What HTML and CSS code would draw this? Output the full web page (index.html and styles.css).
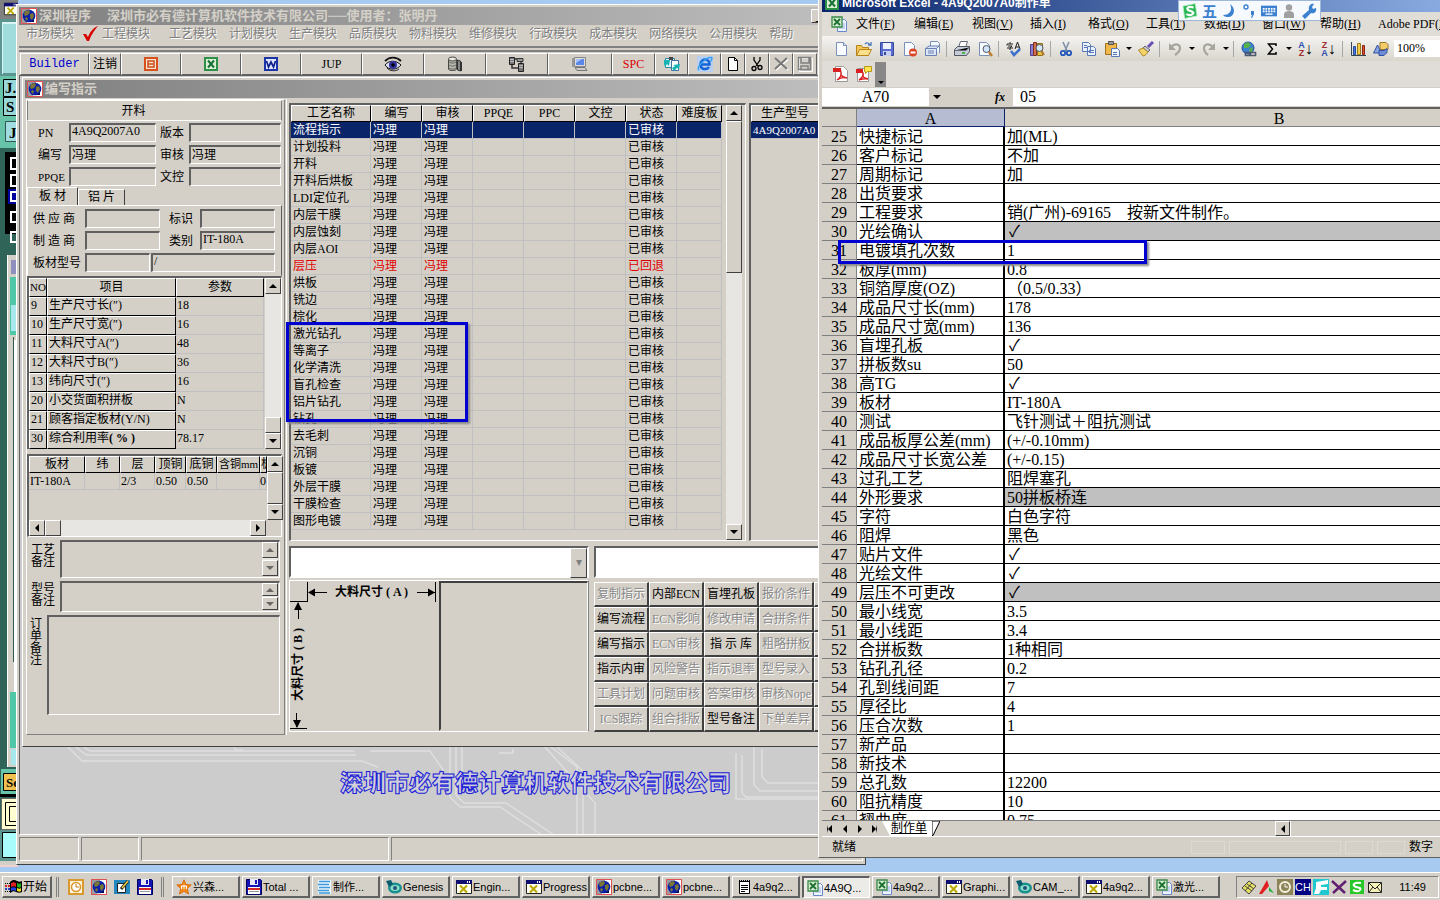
FILE: index.html
```html
<!DOCTYPE html>
<html lang="zh-CN">
  <head>
    <meta charset="UTF-8" />
    <meta name="viewport" content="width=device-width, initial-scale=1.0" />
    <title>深圳程序</title>
    <link rel="stylesheet" href="styles.css">
  </head>
  <body>
    <!-- icons -->
    <svg class="sprite" aria-hidden="true">
      <symbol id="i-globe" viewBox="0 0 16 16"><path fill="#9a9aa0" d="M0 0h16v16H0z"/><path fill="#fff" d="M9 1h6v14H6z"/><path fill="none" stroke="#e05050" d="M.5.5h15v15H.5z"/><circle cx="8" cy="8" r="6.3" fill="#0a1fa8"/><path fill="#7a7436" d="M4 3l4-1 1 2-2 3-3 1-1-2zM9 6l3-1 1 3-2 4-2-2zM5 9l2 1-1 3-2-2z"/><path fill="#000a50" d="M4 13c3 2 7 1 9-2v3H5z"/></symbol>
      <symbol id="i-check" viewBox="0 0 16 16"><path fill="#d80000" d="M1 8l3 0 2 3c2-5 5-9 10-11C12 5 9 9 7 15H5z"/></symbol>
      <symbol id="i-ppt" viewBox="0 0 16 16"><path fill="#fbe3d0" stroke="#d8501c" stroke-width="2" d="M2 2h12v12H2z"/><path fill="none" stroke="#c84c18" stroke-width="1.500" d="M5 5h6v6H5zM5 8h5"/></symbol>
      <symbol id="i-xls" viewBox="0 0 16 16"><path fill="#d9f0d4" stroke="#2c9048" stroke-width="2" d="M2 2h12v12H2z"/><path stroke="#187034" stroke-width="2" d="M5 4.500l6 7M11 4.500l-6 7"/></symbol>
      <symbol id="i-word" viewBox="0 0 16 16"><path fill="#dfe6ff" stroke="#1c34a8" stroke-width="2" d="M2 2h12v12H2z"/><path fill="none" stroke="#10208c" stroke-width="1.700" d="M3.500 5l2 6L8 6l2.500 5 2-6"/></symbol>
      <symbol id="i-eye" viewBox="0 0 18 16"><path fill="none" stroke="#111" stroke-width="1.800" d="M1 5c4-4 11-5 16 0"/><path fill="#d8dcf0" stroke="#111" d="M1 9c4-5 11-5 16 0-4 5-12 6-16 0z"/><circle cx="9" cy="9" r="4" fill="#34349c"/><circle cx="9" cy="9" r="1.800"/><path fill="none" stroke="#222" d="M3 12c3 3 8 4 12 1"/></symbol>
      <symbol id="i-db" viewBox="0 0 16 16"><path fill="#b9b9b0" stroke="#4a4a44" d="M1.500 3v10c0 2 8 2 8 0V3"/><ellipse cx="5.500" cy="3" rx="4" ry="2" fill="#e8e8e0" stroke="#4a4a44"/><path fill="none" stroke="#666" d="M2 6c2 1.500 5 1.500 7 0M2 9c2 1.500 5 1.500 7 0M2 12c2 1.500 5 1.500 7 0"/><path fill="#888" stroke="#333" d="M10.500 4l3 1v10l-3-1z"/><path stroke="#333" d="M14.500 6v9"/></symbol>
      <symbol id="i-net" viewBox="0 0 18 16"><path fill="#777" stroke="#222" d="M1.500 1.500h5v7h-5zM10.500 7.500h5v8h-5z"/><path fill="#bbb" d="M2 3h4v1H2zM2 5h4v1H2zM11 9h4v1h-4zM11 11h4v1h-4z"/><path fill="none" stroke="#333" stroke-width="1.500" d="M7 3h6v4M4 9v3h6"/><path fill="#999" stroke="#333" d="M9 2.500h6v3H9z"/></symbol>
      <symbol id="i-pc" viewBox="0 0 18 16"><path fill="#dcdcdc" stroke="#888" d="M3.500 1.500h11v9h-11z"/><path fill="#5a86e8" d="M5 3h8v6H5z"/><path fill="#a8c4ff" d="M5 3h6l-6 4z"/><path fill="#ccc" stroke="#777" d="M4 11.500h10l2 3H6z"/><path stroke="#999" stroke-width="2" d="M2 2v9"/></symbol>
      <symbol id="i-sync" viewBox="0 0 16 16"><path fill="#e8f6fa" stroke="#2888a0" d="M1.500 2.500h9v9h-9z"/><path fill="#fff" stroke="#3c70a0" d="M7.500 4.500h7v10h-7z"/><path fill="#18b4b4" d="M0 4l6 0-1 6-2-2-2 3-1-3zM16 8l-7 1 2 1-3 2 2 3 3-3 2 1z"/><path fill="#444" d="M5 1h4v3H5z"/></symbol>
      <symbol id="i-ie" viewBox="0 0 16 16"><path fill="#b8cff0" d="M0 0h16v16H0z"/><path fill="none" stroke="#1464d8" stroke-width="2.500" d="M4 8.500h8.500C12.500 1.500 3.500 2 3.500 8.500c0 5 6 6 8.500 2.500"/><path fill="none" stroke="#3aa0f0" stroke-width="1.500" d="M2 14C-1 11 9 1 14.500 1.500c1 .5 0 3-1 4"/></symbol>
      <symbol id="i-new" viewBox="0 0 16 16"><path fill="#fff" stroke="#000" d="M3.500 1.500h6l3 3v10h-9z"/><path fill="none" stroke="#000" d="M9.500 1.500v3h3"/></symbol>
      <symbol id="i-cutb" viewBox="0 0 16 16"><g fill="none" stroke="#000" stroke-width="1.300"><path d="M5 1v3l4 6M11 1v3l-4 6"/><circle cx="5" cy="12.500" r="2"/><circle cx="11" cy="11.500" r="2"/></g></symbol>
      <symbol id="i-del" viewBox="0 0 16 16"><path stroke="#fff" stroke-width="2" d="M3 3l12 11M15 3L3 14"/><path stroke="#777" stroke-width="2" d="M2 2l12 11M14 2L2 13"/></symbol>
      <symbol id="i-saveg" viewBox="0 0 16 16"><path fill="none" stroke="#fff" d="M2.500 2.500h13v13h-13z"/><path fill="none" stroke="#808080" stroke-width="1.500" d="M1.500 1.500h12v12h-12zM4 2v5h8V2M4 14v-4h7v4"/></symbol>
      <symbol id="i-xl" viewBox="0 0 16 16"><path fill="#eef4ff" stroke="#6a88c8" d="M6.500 3.500h7l2 2v10h-9z"/><path stroke="#9ab4e4" d="M8 8h6M8 10h6M8 12h6"/><path fill="#d6ecd0" stroke="#388848" stroke-width="1.300" d="M1 1h10v10H1z"/><path stroke="#1c7030" stroke-width="1.800" d="M3 3l6 6M9 3L3 9"/></symbol>
      <symbol id="i-doc" viewBox="0 0 16 16"><path fill="#f8fbff" stroke="#7a8fb8" d="M3.500 1.500h7l3 3v10h-10z"/><path fill="#cfdcf4" stroke="#7a8fb8" d="M10.500 1.500v3h3"/></symbol>
      <symbol id="i-open" viewBox="0 0 16 16"><path fill="#f4c858" stroke="#b8821c" d="M.5 14.500v-10h5l1 2h6v8z"/><path fill="#fbe08c" stroke="#b8821c" d="M.5 14.500l3-6h12l-3 6z"/><path fill="none" stroke="#4a78b8" stroke-width="1.300" d="M9 3c2-2 4-1 5 1m1-3v3h-3"/></symbol>
      <symbol id="i-save" viewBox="0 0 16 16"><path fill="#5a6ed0" stroke="#38489c" d="M1.500 1.500h13v13h-13z"/><path fill="#eef2ff" d="M4 2h8v6H4z"/><path fill="#c8d0f0" d="M4 10h8v5H4z"/><path fill="#38489c" d="M5 11h2v3H5z"/></symbol>
      <symbol id="i-perm" viewBox="0 0 16 16"><path fill="#f8fbff" stroke="#7a8fb8" d="M2.500 1.500h7l3 3v10h-10z"/><circle cx="11" cy="11.500" r="4" fill="#dc4424"/><path fill="#fff" d="M8.500 10.500h5v2h-5z"/></symbol>
      <symbol id="i-mail" viewBox="0 0 16 16"><path fill="#f4f8ff" stroke="#7a8fb8" d="M5.500 6V.5h7l2 2V12"/><path fill="#dde6f8" stroke="#6a80b0" d="M.5 7.500L4 5h10l-2.500 2.500v7H.5z"/><path fill="none" stroke="#6a80b0" d="M.5 7.500h11M3 10h6M3 12h6"/></symbol>
      <symbol id="i-print" viewBox="0 0 16 16"><path fill="#fff" stroke="#667" d="M4.500 6.500l2-6h7l-2 6"/><path fill="#c4ccd8" stroke="#556" d="M.5 8.500l3-3h12v5l-3 4H.5z"/><path fill="#48b848" d="M8 11h3v2H8z"/><path stroke="#667" d="M1 9.500h11l3-3"/></symbol>
      <symbol id="i-prev" viewBox="0 0 16 16"><path fill="#f8fbff" stroke="#7a8fb8" d="M2.500 1.500h7l3 3v10h-10z"/><circle cx="9.500" cy="8" r="3.500" fill="#cfe6fa" stroke="#556"/><path stroke="#c08030" stroke-width="2.500" d="M12 11l3 4"/></symbol>
      <symbol id="i-spell" viewBox="0 0 16 16"><path fill="none" stroke="#222" d="M1 3h6M1 3v1.500M4 1v2M2 5h4L4 7v2M1 7h6M9 8l2.500-7L14 8M10 6h3"/><path fill="none" stroke="#3c70c8" stroke-width="2.500" d="M5 10l3 4 6-6"/></symbol>
      <symbol id="i-res" viewBox="0 0 16 16"><path fill="#8c7cd0" stroke="#50408c" d="M1.500 3.500h3v11h-3z"/><path fill="#d07050" stroke="#803020" d="M4.500 1.500h3v13h-3z"/><path fill="#e8c040" stroke="#907020" d="M8.500 2.500h5v12h-5z"/><circle cx="10.500" cy="7" r="3.500" fill="#d0e8fa" stroke="#555"/><path stroke="#b07830" stroke-width="2" d="M12.500 10l2.500 4"/></symbol>
      <symbol id="i-cut" viewBox="0 0 16 16"><path stroke="#7c8ca8" stroke-width="1.500" d="M5 1l4 9M11 1L7 10"/><g fill="none" stroke="#2458b8" stroke-width="1.800"><circle cx="5" cy="12" r="2.200"/><circle cx="11" cy="12" r="2.200"/></g></symbol>
      <symbol id="i-copy" viewBox="0 0 16 16"><path fill="#eaf1ff" stroke="#5a78b8" d="M1.500 1.500h6l2 2v7h-8zM6.500 5.500h6l2 2v7h-8z"/><path stroke="#5a78b8" d="M3 4.500h3M3 6.500h3M8 9.500h5M8 11.500h5"/></symbol>
      <symbol id="i-paste" viewBox="0 0 16 16"><path fill="#f0b848" stroke="#9c7020" d="M1.500 2.500h11v11h-11z"/><path fill="#999" stroke="#555" d="M4.500.5h5v3h-5z"/><path fill="#eef4ff" stroke="#5a78b8" d="M7.500 7.500h6l2 2v6h-8z"/><path stroke="#5a78b8" d="M9 11.500h4M9 13.500h4"/></symbol>
      <symbol id="i-brush" viewBox="0 0 16 16"><path stroke="#6a50b0" stroke-width="3" d="M10 6l5-5"/><path fill="#c8c8d0" stroke="#667" d="M7 5l5 4-2 2-5-4z"/><path fill="#f4d468" stroke="#a88828" d="M5 7l5 4c-2 3-4 4-5 4L.5 9z"/></symbol>
      <symbol id="i-undo" viewBox="0 0 16 16"><path fill="none" stroke="#a6a49c" stroke-width="2.200" d="M4 6c4-4 9-3 9 1 0 3-2 5-5 7"/><path fill="#a6a49c" d="M2 2v7h7z"/></symbol>
      <symbol id="i-redo" viewBox="0 0 16 16"><path fill="none" stroke="#a6a49c" stroke-width="2.200" d="M12 6C8 2 3 3 3 7c0 3 1 5 4 7"/><path fill="#a6a49c" d="M14 2v7H7z"/></symbol>
      <symbol id="i-link" viewBox="0 0 16 16"><circle cx="7" cy="7" r="6" fill="#3c80d0" stroke="#24549c"/><path fill="#58b048" d="M3 3l4-2 3 3-3 3-4 0zM8 8l4-2-1 5-2 1z"/><path fill="none" stroke="#4c5870" stroke-width="1.600" d="M4.500 11.500h4v3h-4zM9.500 11.500h5v3h-5z"/></symbol>
      <symbol id="i-sum" viewBox="0 0 16 16"><path fill="none" stroke="#000" stroke-width="1.500" d="M12 5V3H4.500l4 5-4 5H12v-2"/></symbol>
      <symbol id="i-chart" viewBox="0 0 16 16"><path fill="none" stroke="#345" d="M1.500 1v13.500H16"/><path fill="#4a7ae0" stroke="#244c9c" d="M3.500 5.500h2v8h-2z"/><path fill="#f4cc48" stroke="#98781c" d="M7.500 2.500h3v11h-3z"/><path fill="#e05030" stroke="#8c2814" d="M12.500 4.500h2v9h-2z"/></symbol>
      <symbol id="i-draw" viewBox="0 0 16 16"><path fill="#f4cc68" stroke="#98782c" d="M7 1.500h6l2 2v5H7z"/><path fill="#88a4e4" stroke="#34509c" d="M.5 12l4-8 4 8z"/><path fill="#6c8cd8" stroke="#34509c" d="M6 9.500h5l3-2v4l-3 3H6z"/></symbol>
      <symbol id="i-pdf" viewBox="0 0 16 16"><path fill="#fff" stroke="#999" d="M2.500.5h8l4 4v11h-12z"/><path fill="#d82020" d="M0 2h8v4H0z"/><path fill="none" stroke="#d82020" stroke-width="1.400" d="M4 14c4-3 5-5 4-8-1 4 2 5 6 6-4-1-7 0-10 2z"/></symbol>
      <symbol id="i-pdfm" viewBox="0 0 16 16"><path fill="#fff" stroke="#999" d="M1.500 2.500h11v13h-11z"/><path fill="#d82020" d="M0 3h7v4H0z"/><path fill="none" stroke="#d82020" stroke-width="1.400" d="M3 14c4-3 5-5 4-7-1 4 1 5 5 6-4-1-6 0-9 1z"/><path fill="#fce44c" stroke="#b89818" d="M8.500.5h7v5h-4l-2 2v-2h-1z"/></symbol>
      <symbol id="i-sogou" viewBox="0 0 18 18"><path fill="#2cb858" stroke="#c0f0cc" d="M1 3.500l14-3 2 14-14 3z"/><path fill="none" stroke="#fff" stroke-width="2.400" d="M13 5C6 3 4 7 8 8.500s6 2 4 4-6 1-7 0"/></symbol>
      <symbol id="i-moon" viewBox="0 0 16 16"><path fill="#3c80d0" d="M9 1c7 5 4 14-3 13-2 0-3-1-4-2 7 0 10-5 7-11z"/></symbol>
      <symbol id="i-punct" viewBox="0 0 16 16"><circle cx="5" cy="4" r="2" fill="none" stroke="#3c80d0" stroke-width="1.400"/><path fill="#3c80d0" d="M10 8h3v3l-2 4h-1l1-3h-1z"/></symbol>
      <symbol id="i-kbd" viewBox="0 0 18 14"><path fill="#3c80d0" d="M0 1h18v12H0z"/><path stroke="#fff" stroke-width="2" stroke-dasharray="2 1" d="M2 4.500h14M2 7.500h14"/><path stroke="#fff" stroke-width="1.500" d="M5 10.500h8"/></symbol>
      <symbol id="i-user" viewBox="0 0 16 16"><circle cx="8" cy="4.500" r="3.200" fill="#a0a0a0"/><path fill="#a0a0a0" d="M3 15V11c0-4 10-4 10 0v4z"/></symbol>
      <symbol id="i-wrench" viewBox="0 0 16 16"><path fill="#3c80d0" d="M1 13l7-6C7 3 10 0 13 1l-2 3 1 2 3-1c1 4-2 6-5 5l-6 6z"/></symbol>
      <symbol id="i-start" viewBox="0 0 18 16"><path fill="#000" d="M5 3c3-3 5-2 7-1s3 1 5 0v11c-2 1-4 1-6 0s-3-1-6 1z"/><path fill="#e02020" d="M6 4c2-1 3-1 5 0v4C9 7 8 7 6 8z"/><path fill="#20b020" d="M12 4c2 1 3 1 4 0v4c-1 1-2 1-4 0z"/><path fill="#2040e0" d="M6 9c2-1 3-1 5 0v3c-2-1-3-1-5 0z"/><path fill="#f0e020" d="M12 9c2 1 3 1 4 0v3c-1 1-2 1-4 0z"/><path stroke="#000" stroke-dasharray="1 1" d="M0 4.500h5M0 12.500h5"/><path stroke="#d02020" stroke-width="2" stroke-dasharray="2 1" d="M0 7h5"/><path stroke="#2040c0" stroke-width="2" stroke-dasharray="2 1" d="M0 10h5"/></symbol>
      <symbol id="i-clock" viewBox="0 0 16 16"><path fill="#fff4d8" stroke="#d89830" stroke-width="2" d="M1 1h14v14H1z"/><circle cx="8" cy="8" r="4.500" fill="#fff" stroke="#d8962c" stroke-width="1.500"/><path fill="none" stroke="#c07818" d="M8 5v3h3"/></symbol>
      <symbol id="i-desk" viewBox="0 0 16 16"><path fill="#2488c0" d="M0 1h16v14H0z"/><path fill="#fff" stroke="#222" d="M3.500 4.500h8v9h-8z"/><path stroke="#222" stroke-width="3" d="M7 10l7-8"/><path stroke="#f0d040" stroke-width="1.500" d="M8 9l6-7"/></symbol>
      <symbol id="i-floppy" viewBox="0 0 16 16"><path fill="#1414b4" stroke="#000060" d="M.5.5h14l1 1v14H.5z"/><path fill="#e8e8f8" d="M4 0h8v6H4z"/><path fill="#1414b4" d="M9 1h2v4H9z"/><path fill="#fff" d="M2 8h12v7H2z"/><path fill="#d02828" d="M2 9h12v2H2z"/><path stroke="#999" d="M3 12.500h10"/></symbol>
      <symbol id="i-star" viewBox="0 0 16 16"><path fill="#f48c20" stroke="#d86c10" d="M8 .8l2 4.700 5.200.5-3.900 3.500 1.200 5.500L8 12.200 3.500 15l1.200-5.500L.8 6 6 5.500z"/><path fill="none" stroke="#fff" d="M5.500 10V7h5v3M8 6v4"/></symbol>
      <symbol id="i-wps" viewBox="0 0 16 16"><path fill="#e8f6ff" d="M2 1h13v14H2z"/><path stroke="#3c98d8" stroke-width="1.500" d="M3 2.500h11M2 5.500h11M3 8.500h11M2 11.500h11M3 14h11"/></symbol>
      <symbol id="i-gen" viewBox="0 0 16 16"><ellipse cx="9" cy="9" rx="7" ry="5.500" fill="#189090"/><path fill="#0c5c70" d="M0 2l5-1 2 4-4 3z"/><ellipse cx="9" cy="9" rx="4.500" ry="3" fill="#90e0c8"/><circle cx="9" cy="9" r="2" fill="#205080"/></symbol>
      <symbol id="i-xwin" viewBox="0 0 16 16"><path fill="#fffff0" stroke="#222" d="M.5 1.500h15v13H.5z"/><path fill="#101070" d="M0 1h16v4H0z"/><path fill="#fff" d="M11 2h1v2h-1zM13 2h1v2h-1z"/><path stroke="#b8a800" stroke-width="2" d="M4 6.500l7 7M11 6.500l-7 7"/></symbol>
      <symbol id="i-note" viewBox="0 0 16 16"><path fill="#fff" stroke="#000" d="M3.500 2.500h10v12h-10z"/><path stroke="#000" stroke-width="2" stroke-dasharray="1 1" d="M3 2h11"/><path stroke="#000" d="M5 6.500h7M5 8.500h7M5 10.500h7M5 12.500h4"/></symbol>
      <symbol id="i-t1" viewBox="0 0 16 16"><path fill="#e8e060" stroke="#444" d="M1 9l7-7 7 5-7 8z"/><path stroke="#444" d="M4 7l7 5M6 5l7 5M4 12l7-8"/></symbol>
      <symbol id="i-t2" viewBox="0 0 16 16"><path fill="#e02020" d="M8 1l2 6-7 8H0z"/><path fill="#20b040" d="M10 8l5 6-5-2z"/></symbol>
      <symbol id="i-t3" viewBox="0 0 16 16"><path fill="#8c8458" d="M0 0h16v16H0z"/><circle cx="8" cy="8" r="5" fill="none" stroke="#f4f0dc" stroke-width="2"/><path fill="none" stroke="#fff" d="M8 5v3h3"/></symbol>
      <symbol id="i-t5" viewBox="0 0 16 16"><path fill="#20c8d0" d="M0 0h16v16H0z"/><path fill="#fff" d="M3 3l12-2v4L8 6v2h6v3H8l-2 4H1l2-6z"/></symbol>
      <symbol id="i-t6" viewBox="0 0 16 16"><path stroke="#602070" stroke-width="2.500" d="M1 2l13 12M15 2L2 14"/></symbol>
      <symbol id="i-t7" viewBox="0 0 16 16"><path fill="#28c828" d="M1 1h14v14H1z"/><path fill="none" stroke="#fff" stroke-width="2" d="M12 4C5 3 3 6 6 7.500s7 1 5 3.500-5 1-7 0"/></symbol>
      <symbol id="i-t8" viewBox="0 0 16 16"><path fill="#f4f0b8" stroke="#222" d="M1.500 3.500h13v10h-13z"/><path fill="none" stroke="#222" d="M2 4l6 6 6-6M2 13l4-5M14 13l-4-5"/></symbol>
    </svg>

    <main class="desktop">
      <!-- windows that stick out on the left -->
      <svg class="behind" width="18" height="872" aria-hidden="true">
        <path fill="#808080" d="M0 0h18v872H0z"/>
        <svg x="3" y="2" width="16" height="14"><use href="#i-xwin"/></svg>
        <path fill="#5c9490" d="M0 19h18v59H0z"/><path fill="#a0dcdc" d="M3 24h15v49H3z"/><path fill="#d8f4f4" d="M2 22h16v2H2zM2 22h1v52H2z"/>
        <path fill="#68c4a8" d="M0 76h18v72H0z"/><path fill="#98d8d8" stroke="#000" d="M3.500 79.500h18v17h-18zM3.500 97.500h18v18h-18z"/>
        <path fill="#a0dce0" stroke="#305850" d="M5.500 121.500h18v20h-18z"/>
        <path fill="#306458" d="M0 148h18v724H0z"/>
        <path fill="#000" d="M5 152h13v82H5z"/><path fill="#0000a0" d="M8 189h10v15H8z"/>
        <path fill="none" stroke="#fff" stroke-width="2" d="M11 158h9v11h-9zM11 175h9v11h-9zM11 192h9v9h-9zM11 212h9v10h-9zM11 232h9v10h-9z"/>
        <path fill="#d4d0c8" d="M7 255h11v512H7z"/><path fill="#fff" d="M7 255h1v512H7zM14 340h2v352h-2z"/><path fill="#9090c0" d="M11 260h7v14h-7z"/>
        <path fill="#50c8a8" d="M10 277h8v58h-8zM10 692h8v56h-8z"/><path fill="#a8e8ec" d="M11 305h7v26h-7zM11 749h7v16h-7z"/><path fill="#305850" d="M13 337h1v325h-1z"/>
        <path fill="#68c4a8" d="M1 769h17v25H1z"/><path fill="#f0c050" stroke="#000" d="M3.500 773.500h18v17h-18z"/>
        <path fill="#000" d="M0 794h18v3H0z"/><path fill="#fffcd0" stroke="#666" d="M1.500 798.500h20v31h-20z"/><path fill="none" stroke="#000" d="M5.500 802.500h16v23h-16zM9.500 806.500h12v15h-12z"/>
        <path fill="#5c9490" d="M0 830h18v35H0z"/><path fill="#a8fcfc" stroke="#000" d="M2.500 832.500h18v25h-18z"/>
        <path fill="#d4d0c8" d="M0 861h18v4H0z"/><path fill="#f0d0d0" d="M0 865h18v2H0z"/><path fill="#a6caf0" d="M0 867h18v5H0z"/>
        <g font-family="Liberation Serif" font-weight="bold" font-size="15"><text x="5" y="93">J.</text><text x="6" y="112">S</text><text x="9" y="138">J</text><text x="6" y="787" font-size="13">Se</text></g>
      </svg>

      <section class="window erp">
        <div class="titlebar">
          <svg class="ico"><use href="#i-globe"/></svg>
          <span>深圳程序</span><span class="company">深圳市必有德计算机软件技术有限公司──使用者：张明丹</span>
          <button class="min" aria-label="最小化">_</button>
        </div>
        <nav class="menu">
          <a href="#">市场模块</a>
          <a href="#" class="checked"><svg class="ico"><use href="#i-check"/></svg>工程模块</a>
          <a href="#">工艺模块</a><a href="#">计划模块</a><a href="#">生产模块</a><a href="#">品质模块</a><a href="#">物料模块</a><a href="#">维修模块</a><a href="#">行政模块</a><a href="#">成本模块</a><a href="#">网络模块</a><a href="#">公用模块</a><a href="#">帮助</a>
        </nav>
        <div class="toolbar">
          <button class="builder">Builder</button>
          <button>注销</button>
          <button aria-label="PowerPoint"><svg class="ico"><use href="#i-ppt"/></svg></button>
          <button aria-label="Excel"><svg class="ico"><use href="#i-xls"/></svg></button>
          <button aria-label="Word"><svg class="ico"><use href="#i-word"/></svg></button>
          <button>JUP</button>
          <button aria-label="查看"><svg class="ico wide"><use href="#i-eye"/></svg></button>
          <button aria-label="数据库"><svg class="ico"><use href="#i-db"/></svg></button>
          <button aria-label="网络"><svg class="ico wide"><use href="#i-net"/></svg></button>
          <button aria-label="电脑"><svg class="ico wide"><use href="#i-pc"/></svg></button>
          <button class="spc">SPC</button>
          <button aria-label="同步"><svg class="ico"><use href="#i-sync"/></svg></button>
          <button aria-label="浏览器"><svg class="ico"><use href="#i-ie"/></svg></button>
          <button aria-label="新建"><svg class="ico"><use href="#i-new"/></svg></button>
          <button aria-label="剪切"><svg class="ico"><use href="#i-cutb"/></svg></button>
          <button aria-label="删除"><svg class="ico"><use href="#i-del"/></svg></button>
          <button aria-label="保存"><svg class="ico"><use href="#i-saveg"/></svg></button>
        </div>

        <div class="mdi">
          <div class="child">
            <div class="titlebar"><svg class="ico"><use href="#i-globe"/></svg><span>编写指示</span></div>
            <div class="child-body">
              <div class="side">
                <h2>开料</h2>
                <form class="fields">
                  <label for="pn">PN</label><input id="pn" value="4A9Q2007A0">
                  <label for="ver">版本</label><input id="ver">
                  <label for="writer">编写</label><input id="writer" value="冯理">
                  <label for="checker">审核</label><input id="checker" value="冯理">
                  <label for="ppqe" class="small">PPQE</label><input id="ppqe">
                  <label for="doc">文控</label><input id="doc">
                </form>
                <div class="tabs"><button class="active">板 材</button><button>铝 片</button></div>
                <div class="pane">
                  <div class="line"><label for="sup">供 应 商</label><input id="sup"><label for="mark">标识</label><input id="mark"></div>
                  <div class="line"><label for="mak">制 造 商</label><input id="mak"><label for="kind">类别</label><input id="kind" value="IT-180A"></div>
                  <div class="line model"><label for="mod">板材型号</label><input id="mod"><input aria-label="型号" value="/"></div>
                </div>
                <div class="box params">
                  <table>
                    <colgroup><col class="c-no"><col class="c-item"><col></colgroup>
                    <thead><tr><th class="small">NO</th><th>项目</th><th>参数</th></tr></thead>
                    <tbody>
                      <tr><th>9</th><th>生产尺寸长(″)</th><td>18</td></tr>
                      <tr><th>10</th><th>生产尺寸宽(″)</th><td>16</td></tr>
                      <tr><th>11</th><th>大料尺寸A(″)</th><td>48</td></tr>
                      <tr><th>12</th><th>大料尺寸B(″)</th><td>36</td></tr>
                      <tr><th>13</th><th>纬向尺寸(″)</th><td>16</td></tr>
                      <tr><th>20</th><th>小交货面积拼板</th><td>N</td></tr>
                      <tr><th>21</th><th>顾客指定板材(Y/N)</th><td>N</td></tr>
                      <tr><th>30</th><th>综合利用率<b>( % )</b></th><td>78.17</td></tr>
                    </tbody>
                  </table>
                  <div class="scroll low"><button class="up" aria-label="上"></button><i></i><button class="down" aria-label="下"></button></div>
                </div>
                <div class="box boards">
                  <div class="boards-top">
                    <table>
                      <tr><th>板材</th><th>纬</th><th>层</th><th>顶铜</th><th>底铜</th><th class="small">含铜mm</th><th>板</th></tr>
                      <tr><td>IT-180A</td><td></td><td>2/3</td><td>0.50</td><td>0.50</td><td></td><td>0</td></tr>
                    </table>
                    <div class="scroll mid"><button class="up" aria-label="上"></button><i></i><button class="down" aria-label="下"></button></div>
                  </div>
                  <div class="scroll flat"><button class="left" aria-label="左"></button><i></i><button class="right" aria-label="右"></button></div>
                </div>
                <div class="note"><label for="n1">工艺备注</label><textarea id="n1"></textarea><div class="scroll off"><button class="up" aria-label="上" disabled></button><button class="down" aria-label="下" disabled></button></div></div>
                <div class="note short"><label for="n2">型号备注</label><textarea id="n2"></textarea><div class="scroll off"><button class="up" aria-label="上" disabled></button><button class="down" aria-label="下" disabled></button></div></div>
                <div class="note order"><label for="n3">订单备注</label><textarea id="n3"></textarea></div>
              </div>

              <div class="work">
                <div class="lists">
                  <div class="box flow">
                    <table>
                      <colgroup><col class="c-name"><col><col><col><col><col><col><col class="c-hard"></colgroup>
                      <thead><tr><th>工艺名称</th><th>编写</th><th>审核</th><th>PPQE</th><th>PPC</th><th>文控</th><th>状态</th><th>难度板</th></tr></thead>
                      <tbody id="flow"></tbody>
                    </table>
                    <div class="scroll top"><button class="up" aria-label="上"></button><i></i><button class="down" aria-label="下"></button></div>
                  </div>
                  <div class="box types">
                    <table><thead><tr><th>生产型号</th></tr></thead><tbody><tr class="sel"><td class="small">4A9Q2007A0</td></tr></tbody></table>
                  </div>
                </div>
                <div class="lower">
                  <div class="draw">
                    <div class="combo"><select aria-label="选择"><option></option></select></div>
                    <div class="draw-row">
                      <svg class="plan" width="149" height="152">
                        <g fill="none" stroke="#000"><path d="M17.500 1v20M145.500 1v20M0 20.500h18M0 147.500h17M19 11.500h18M127 11.500h18M8.500 22v16M6.500 132v14"/></g>
                        <path d="M18 11.500l7-4v8zM145 11.500l-7-4v8zM8 21l-4 8h8zM7 147l-4-8h8z"/>
                        <text x="45" y="15">大料尺寸 ( A )</text>
                        <text transform="translate(12 120) rotate(-90)">大料尺寸 ( B )</text>
                      </svg>
                      <div class="preview"></div>
                    </div>
                  </div>
                  <div class="ops">
                    <input class="msg" aria-label="信息">
                    <div class="actions" id="actions"></div>
                  </div>
                </div>
              </div>
            </div>
            <div class="mark mark-flow"></div>
          </div>
          <div class="brand">
            <svg width="830" height="88" aria-hidden="true">
              <g fill="none" stroke="#dedede" stroke-width="1.500">
                <path d="M48 0l14 14h280l16 6M56 0l10 8h270M64 0l6 4h264M215 0v3h8M350 4h60l14 20M430 0v50l10 10h40l60 40M436 0v48l8 8h42l60 40M442 0v44M525 0l50 56v32M531 0l26 20 0 68M537 0l26 24v64M493 2v4h-14"/>
                <path d="M716 6v46h112M722 8v38l4 4h102M734 0v38l6 6h90M742 2v28l6 6h80"/>
              </g>
            </svg>
            <h1>深圳市必有德计算机软件技术有限公司</h1>
          </div>
        </div>
        <div class="status"><span></span><span></span><span></span><span></span></div>
      </section>

      <section class="window excel">
        <div class="titlebar"><svg class="ico"><use href="#i-xls"/></svg><span>Microsoft Excel - 4A9Q2007A0制作单</span></div>
        <nav class="xl-menu">
          <svg class="ico"><use href="#i-xl"/></svg>
          <a href="#">文件(<u>F</u>)</a><a href="#">编辑(<u>E</u>)</a><a href="#">视图(<u>V</u>)</a><a href="#">插入(<u>I</u>)</a><a href="#">格式(<u>O</u>)</a><a href="#">工具(<u>T</u>)</a><a href="#">数据(<u>D</u>)</a><a href="#">窗口(<u>W</u>)</a><a href="#">帮助(<u>H</u>)</a><a href="#">Adobe PDF(<u>B</u>)</a>
        </nav>
        <div class="xl-tools" id="xltools"></div>
        <div class="xl-tools pdf">
          <button aria-label="转换为 PDF"><svg class="ico"><use href="#i-pdf"/></svg></button>
          <button aria-label="转换并发送"><svg class="ico"><use href="#i-pdfm"/></svg></button>
          <button class="more" aria-label="工具栏选项"></button>
        </div>
        <div class="formula">
          <input class="cellname" aria-label="名称框" value="A70"><i class="tri"></i><em>fx</em>
          <input class="content" aria-label="编辑栏" value="05">
        </div>
        <div class="grid">
          <table>
            <colgroup><col class="x-no"><col class="x-a"><col class="x-b"></colgroup>
            <thead><tr><th></th><th class="on">A</th><th>B</th></tr></thead>
            <tbody id="sheet"></tbody>
          </table>
        </div>
        <div class="sheets">
          <button class="first" aria-label="第一张"></button><button class="prev" aria-label="上一张"></button><button class="next" aria-label="下一张"></button><button class="last" aria-label="最后一张"></button>
          <a href="#"><u>制作单</u></a>
          <svg class="tab-edge" width="8" height="15" aria-hidden="true"><path fill="#fff" stroke="#000" d="M0 14.500h1L8 0H0z"/></svg>
          <button class="hleft" aria-label="左"></button><i class="htrack"></i>
        </div>
        <div class="xl-status"><span>就绪</span><i></i><i></i><i></i><i></i><span>数字</span></div>
        <div class="mark mark-row"></div>
      </section>

      <div class="ime">
        <svg class="ico"><use href="#i-sogou"/></svg><span>五</span><svg class="ico"><use href="#i-moon"/></svg><svg class="ico"><use href="#i-punct"/></svg><svg class="ico"><use href="#i-kbd"/></svg><svg class="ico"><use href="#i-user"/></svg><svg class="ico"><use href="#i-wrench"/></svg>
      </div>
    </main>

    <footer class="taskbar">
      <button class="start"><svg class="ico wide"><use href="#i-start"/></svg>开始</button>
      <div class="quick">
        <a href="#" aria-label="时钟"><svg class="ico"><use href="#i-clock"/></svg></a>
        <a href="#" aria-label="深圳程序"><svg class="ico"><use href="#i-globe"/></svg></a>
        <a href="#" aria-label="显示桌面"><svg class="ico"><use href="#i-desk"/></svg></a>
        <a href="#" aria-label="Total"><svg class="ico"><use href="#i-floppy"/></svg></a>
      </div>
      <div class="tasks" id="tasks"></div>
      <div class="tray">
        <svg class="ico"><use href="#i-t1"/></svg><svg class="ico"><use href="#i-t2"/></svg><svg class="ico"><use href="#i-t3"/></svg><span class="lang">CH</span><svg class="ico"><use href="#i-t5"/></svg><svg class="ico"><use href="#i-t6"/></svg><svg class="ico"><use href="#i-t7"/></svg><svg class="ico"><use href="#i-t8"/></svg>
        <time>11:49</time>
      </div>
    </footer>

    <script>
      const icon = (name) => `<svg class="ico"><use href="#i-${name}"/></svg>`;

      // process list
      const steps = ["流程指示", "计划投料", "开料", "开料后烘板", "LDI定位孔", "内层干膜", "内层蚀刻", "内层AOI", "层压", "烘板", "铣边", "棕化", "激光钻孔", "等离子", "化学清洗", "盲孔检查", "铝片钻孔", "钻孔", "去毛刺", "沉铜", "板镀", "外层干膜", "干膜检查", "图形电镀"];
      document.querySelector("#flow").innerHTML = steps
        .map((step, i) => {
          const back = step == "层压";
          const cls = i == 0 ? "sel" : back ? "back" : "";
          return `<tr class="${cls}"><td>${step}</td><td>冯理</td><td>冯理</td><td></td><td></td><td></td><td>${back ? "已回退" : "已审核"}</td><td></td></tr>`;
        })
        .join("");

      // a star marks an enabled button
      const actions = [
        "复制指示", "*内部ECN", "*盲埋孔板", "报价条件", "",
        "*编写流程", "ECN影响", "修改申请", "合拼条件", "",
        "*编写指示", "ECN审核", "*指 示 库", "粗略拼板", "",
        "*指示内审", "风险警告", "指示退率", "型号录入", "",
        "工具计划", "问题审核", "答案审核", "审核Nope", "",
        "ICS跟踪", "组合排版", "*型号备注", "下单差异", "",
      ];
      document.querySelector("#actions").innerHTML = actions
        .map((a) => (a[0] == "*" ? `<button>${a.slice(1)}</button>` : `<button disabled>${a}</button>`))
        .join("");

      // excel rows, first one is row 25
      const rows = [
        ["快捷标记", "加(ML)"], ["客户标记", "不加"], ["周期标记", "加"], ["出货要求", ""],
        ["工程要求", "销(广州)-69165　按新文件制作。"], ["光绘确认", "✓", 1], ["电镀填孔次数", "1"], ["板厚(mm)", "0.8"],
        ["铜箔厚度(OZ)", "（0.5/0.33）"], ["成品尺寸长(mm)", "178"], ["成品尺寸宽(mm)", "136"], ["盲埋孔板", "✓"],
        ["拼板数su", "50"], ["高TG", "✓"], ["板材", "IT-180A"], ["测试", "飞针测试＋阻抗测试"],
        ["成品板厚公差(mm)", "(+/-0.10mm)"], ["成品尺寸长宽公差", "(+/-0.15)"], ["过孔工艺", "阻焊塞孔"], ["外形要求", "50拼板桥连", 1],
        ["字符", "白色字符"], ["阻焊", "黑色"], ["贴片文件", "✓"], ["光绘文件", "✓"],
        ["层压不可更改", "✓", 1], ["最小线宽", "3.5"], ["最小线距", "3.4"], ["合拼板数", "1种相同"],
        ["钻孔孔径", "0.2"], ["孔到线间距", "7"], ["厚径比", "4"], ["压合次数", "1"],
        ["新产品", ""], ["新技术", ""], ["总孔数", "12200"], ["阻抗精度", "10"], ["翘曲度", "0.75"],
      ];
      document.querySelector("#sheet").innerHTML = rows
        .map(([a, b, grey], i) => `<tr><th>${25 + i}</th><td>${a}</td><td class="${grey ? "grey" : ""}">${b == "✓" ? `<span class="tick">✓</span>` : b}</td></tr>`)
        .join("");

      const tools = "doc open save perm mail | print prev | spell res | cut copy paste v brush | undo v redo v | link sum v az za | chart draw".split(" ");
      document.querySelector("#xltools").innerHTML =
        tools
          .map((t) => {
            if (t == "|") return `<i class="sep"></i>`;
            if (t == "v") return `<i class="drop"></i>`;
            if (t == "az") return `<button class="sort"><span><b>A</b><b>Z</b></span>↓</button>`;
            if (t == "za") return `<button class="sort za"><span><b>Z</b><b>A</b></span>↓</button>`;
            return `<button aria-label="${t}">${icon(t)}</button>`;
          })
          .join("") + `<input class="zoom" aria-label="显示比例" value="100%">`;

      const tasks = [
        ["star", "兴森..."], ["floppy", "Total ..."], ["wps", "制作..."], ["gen", "Genesis"], ["xwin", "Engin..."],
        ["xwin", "Progress"], ["globe", "pcbne..."], ["globe", "pcbne..."], ["note", "4a9q2..."], ["xl", "4A9Q..."],
        ["xl", "4a9q2..."], ["xwin", "Graphi..."], ["gen", "CAM_..."], ["xwin", "4a9q2..."], ["xl", "激光..."],
      ];
      document.querySelector("#tasks").innerHTML = tasks
        .map(([i, t]) => `<button class="${t == "4A9Q..." ? "pressed" : ""}">${icon(i)}${t}</button>`)
        .join("");
    </script>
  </body>
</html>
```

FILE: styles.css
```css
* {
  box-sizing: border-box;
}

body {
  margin: 0;
  height: 100vh;
  display: flex;
  flex-direction: column;
  overflow: hidden;
  background-color: #a6caf0;
  color: #000;
  font: 12px/16px "Liberation Serif", "Noto Sans CJK SC", serif;
}

button,
input,
select,
textarea {
  font: inherit;
  color: inherit;
  margin: 0;
  padding: 0;
  border-radius: 0;
}

button {
  background-color: #d4d0c8;
  border: 1px solid;
  border-color: #fff #404040 #404040 #fff;
  white-space: nowrap;
}

a {
  color: inherit;
  text-decoration: none;
}

table {
  table-layout: fixed;
  border-spacing: 0;
}

th,
td {
  padding: 0 2px;
  font-weight: normal;
  text-align: left;
  white-space: nowrap;
  overflow: hidden;
}

.sprite {
  display: none;
}

.ico {
  width: 16px;
  height: 16px;
  flex: none;
  display: block;
}

.ico.wide {
  width: 18px;
}

/* desktop */
.desktop {
  flex: 1;
  position: relative;
  overflow: hidden;
}

.behind {
  position: absolute;
  left: 0;
  top: 0;
}

.window {
  position: absolute;
  display: flex;
  flex-direction: column;
  background-color: #d4d0c8;
  overflow: hidden;
}

.titlebar {
  display: flex;
  align-items: center;
  gap: 2px;
  height: 18px;
  padding: 0 2px;
  white-space: nowrap;
  font-weight: bold;
  color: #d4d0c8;
  background: linear-gradient(90deg, #808080, #c0c0c0);
}

.erp .titlebar {
  font-size: 13px;
}

.erp {
  left: 16px;
  right: 574px;
  top: 4px;
  bottom: 7px;
  padding: 2px;
  border: 1px solid;
  border-color: #fff #404040 #404040 #fff;
}

.company {
  margin-left: 14px;
}

.min {
  margin-left: auto;
  width: 16px;
  height: 14px;
  margin-right: 34px;
  line-height: 8px;
  color: #000;
}

.menu {
  display: flex;
  gap: 12px;
  height: 23px;
  padding: 1px 7px;
  border-bottom: 2px solid #808080;
  color: #808080;
  text-shadow: 1px 1px #fff;
}

.menu .checked {
  display: flex;
  gap: 4px;
  margin: 0 7px 0 -4px;
}

.toolbar {
  display: grid;
  grid-template-columns: 69px 32px repeat(3, 60px) 61px repeat(3, 62px) 64px 43px 33px 33px repeat(4, 24px);
  height: 25px;
  padding: 1px 0 0 1px;
  margin-top: 2px;
  border-top: 2px solid #808080;
}

.toolbar button {
  display: flex;
  align-items: center;
  justify-content: center;
  border-color: #fff #606060 #606060 #fff;
}

.toolbar .builder {
  color: #00c;
  font: 12px/16px "Liberation Mono", monospace;
}

.toolbar .spc {
  color: #d00;
}

.mdi {
  flex: 1;
  min-height: 0;
  display: flex;
  flex-direction: column;
  background-color: #ccc;
  border: 1px solid;
  border-color: #606060 #fff #fff #606060;
  overflow: hidden;
}

.child {
  position: relative;
  margin: 1px 0 0 2px;
  padding: 2px;
  background-color: #d4d0c8;
  border: 1px solid;
  border-color: #fff #404040 #404040 #fff;
}

.child-body {
  display: flex;
  padding: 1px 0 9px 1px;
}

/* left column */
.side {
  width: 259px;
  flex: none;
  padding-right: 2px;
  border: 1px solid;
  border-color: #fff #808080 #808080 #fff;
}

.side h2 {
  margin: 0 0 2px;
  height: 21px;
  padding-right: 42px;
  font: inherit;
  line-height: 20px;
  text-align: center;
  border: 1px solid;
  border-color: #fff #808080 #fff #808080;
}

.side input,
.side textarea {
  height: 19px;
  min-width: 0;
  width: 100%;
  padding: 0 1px 3px;
  background-color: #d4d0c8;
  border: 2px solid;
  border-color: #606060 #fff #fff #606060;
  border-right-width: 1px;
  border-bottom-width: 1px;
  resize: none;
}

.fields {
  display: grid;
  grid-template-columns: 31px 87px 33px 92px;
  row-gap: 3px;
  padding-left: 11px;
  margin: 0;
}

.fields label {
  height: 19px;
  line-height: 21px;
}

.fields input + label {
  padding-left: 4px;
}

.fields input + label:nth-child(4n + 1) {
  padding-left: 0;
}

.tabs {
  display: flex;
  height: 18px;
  margin-top: 1px;
  align-items: flex-end;
}

.tabs button {
  width: 47px;
  height: 16px;
  line-height: 13px;
  border-bottom: 0;
}

.tabs .active {
  width: 51px;
  height: 18px;
}

.pane {
  display: flex;
  flex-direction: column;
  gap: 3px;
  height: 71px;
  padding: 3px 5px 0;
  border: 1px solid;
  border-color: #fff #606060 #d4d0c8 #fff;
}

.line {
  display: grid;
  grid-template-columns: 52px 75px 40px 75px;
}

.line label {
  line-height: 20px;
  height: 19px;
}

.line label + input + label {
  padding-left: 9px;
}

.line.model {
  grid-template-columns: 51px 65px 124px;
  column-gap: 1px;
}

.box {
  display: flex;
  border: 2px solid;
  border-color: #606060 #fff #fff #606060;
  border-right-width: 1px;
  border-bottom-width: 1px;
}

.box thead th,
.boards th {
  text-align: center;
  padding: 0;
  border: 1px solid;
  border-color: #fff #000 #000 #fff;
}

.box td {
  border-right: 1px solid #c0c0c0;
  border-bottom: 1px solid #c0c0c0;
}

.params {
  height: 173px;
  border-bottom: 0;
}

.params table {
  width: 235px;
}

.params tr {
  height: 19px;
}

.params th,
.params td {
  height: 19px;
  line-height: 15px;
  padding: 0 1px 2px;
}

.params tbody th {
  border: 1px solid;
  border-color: #fff #000 #000 #fff;
}

.child .small {
  font-size: 11px;
}

.c-no {
  width: 18px;
}

.c-item {
  width: 129px;
}

.boards {
  flex-direction: column;
  height: 83px;
  margin-top: 5px;
}

.boards-top {
  display: flex;
  height: 64px;
}

.boards table {
  width: 238px;
  height: 34px;
}

.boards th,
.boards td {
  width: 31px;
  height: 17px;
  line-height: 15px;
  padding: 0 1px;
}

.boards th {
  padding: 0;
}

.boards th:nth-child(1) {
  width: 56px;
}

.boards th:nth-child(2),
.boards th:nth-child(3) {
  width: 35px;
}

.boards th:nth-child(6) {
  width: 43px;
}

.boards th:nth-child(7) {
  width: 7px;
}

.boards td:last-child {
  padding: 0;
}

/* scroll bars */
.scroll {
  display: flex;
  flex-direction: column;
  width: 16px;
  margin-left: auto;
  background-color: #e8e6e2;
}

.scroll button,
.scroll i {
  display: flex;
  align-items: center;
  justify-content: center;
  width: 16px;
  height: 16px;
  flex: none;
  background-color: #d4d0c8;
  border: 1px solid;
  border-color: #fff #404040 #404040 #fff;
}

.scroll .down {
  margin-top: auto;
}

.up::before,
.down::before,
.left::before,
.right::before,
.hleft::before,
.prev::before,
.next::before,
.first::before,
.last::before,
.tri::before,
.drop::before {
  content: "";
  border: 4px solid transparent;
}

.up::before {
  border-bottom-color: #000;
  border-top: 0;
}

.down::before,
.tri::before,
.drop::before {
  border-top-color: #000;
  border-bottom: 0;
}

.left::before,
.hleft::before,
.prev::before,
.first::before {
  border-right-color: #000;
  border-left: 0;
}

.right::before,
.next::before,
.last::before {
  border-left-color: #000;
  border-right: 0;
}

.scroll.low i {
  margin-top: auto;
}

.scroll.low .down {
  margin-top: 0;
}

.scroll.mid i {
  height: 32px;
}

.scroll.top i {
  height: 152px;
}

.scroll.flat {
  flex-direction: row;
  width: 237px;
  height: 16px;
  margin: 0;
}

.scroll.flat .right {
  margin-left: auto;
}

.scroll.off button::before {
  opacity: 0.5;
}

/* remarks */
.note {
  display: flex;
  position: relative;
  height: 38px;
  margin-top: 3px;
  padding-right: 2px;
}

.note label {
  width: 33px;
  flex: none;
  padding: 4px 4px 0;
  line-height: 12px;
}

.note textarea {
  height: 100%;
}

.note .scroll {
  position: absolute;
  right: 4px;
  top: 2px;
  bottom: 2px;
}

.note.short {
  height: 31px;
}

.note.short label {
  padding-top: 2px;
}

.note.short .scroll button {
  height: 13px;
}

.note.order {
  height: 100px;
  margin-bottom: 19px;
}

.note.order label {
  width: 20px;
  padding: 3px 4px 0 3px;
}

/* middle */
.work {
  flex: 1;
  min-width: 0;
  padding: 4px 0 0 2px;
  margin-left: 1px;
  border-left: 1px solid #fff;
}

.lists {
  display: flex;
  gap: 3px;
}

.flow {
  width: 457px;
  height: 438px;
}

.flow table {
  width: 431px;
  height: 424px;
}

.flow th,
.flow td,
.types th,
.types td {
  height: 17px;
  line-height: 15px;
}

.flow .scroll {
  margin-right: 3px;
}

.c-name {
  width: 80px;
}

.c-hard {
  width: 45px;
}

.sel td {
  background-color: #0a246a;
  color: #fff;
}

.back td {
  color: #e00000;
}

.types {
  flex: 1;
}

.types table {
  width: 68px;
  height: 34px;
}

.lower {
  display: flex;
  gap: 5px;
  margin-top: 5px;
}

.draw {
  width: 300px;
  flex: none;
}

.combo {
  position: relative;
  height: 32px;
  margin-bottom: 2px;
}

.combo select,
.msg {
  appearance: none;
  width: 100%;
  height: 32px;
  background-color: #fff;
  border: 2px solid;
  border-color: #606060 #fff #fff #606060;
  display: block;
}

.combo::after {
  content: "▾";
  position: absolute;
  right: 2px;
  top: 2px;
  width: 15px;
  height: 28px;
  line-height: 26px;
  text-align: center;
  color: #808080;
  background-color: #d4d0c8;
  border: 1px solid;
  border-color: #fff #404040 #404040 #fff;
}

.draw-row {
  display: flex;
  height: 152px;
  border: 1px solid;
  border-color: #fff #808080 #fff #fff;
}

.plan text {
  font-weight: bold;
}

.preview {
  flex: 1;
  border: 2px solid;
  border-color: #404040 #fff #d4d0c8 #404040;
  border-right-width: 1px;
}

.ops {
  flex: 1;
  min-width: 0;
}

.actions {
  display: grid;
  grid-template-columns: repeat(5, 55px);
  grid-auto-rows: 25px;
  margin-top: 4px;
}

.actions button {
  border-width: 1px 2px 2px 1px;
}

.actions button:disabled {
  color: #888;
  text-shadow: 1px 1px #fff;
}

.mark {
  position: absolute;
  border: 3px solid #0000d0;
  box-shadow: 2px 2px 2px #888;
}

.mark-flow {
  left: 263px;
  top: 244px;
  width: 182px;
  height: 100px;
}

.brand {
  position: relative;
  flex: 1;
}

.brand svg {
  position: absolute;
  left: 0;
  top: 0;
}

.brand h1 {
  position: relative;
  margin: 18px 0 0 320px;
  font: 900 23px/32px "Noto Sans CJK SC", sans-serif;
  white-space: nowrap;
  color: #d0d0d8;
  -webkit-text-stroke: 1px #2020d8;
}

.status {
  display: grid;
  grid-template-columns: 60px 58px 248px 1fr;
  gap: 2px;
  height: 27px;
  padding: 2px 0 1px;
}

.status span {
  border: 1px solid;
  border-color: #808080 #fff #fff #808080;
}

/* excel */
.excel {
  left: 818px;
  right: 0;
  top: -8px;
  bottom: 14px;
  padding-left: 3px;
  border: 2px solid;
  border-color: #fff #d4d0c8 #606060 #fff;
  border-right: 0;
  border-left-width: 1px;
  border-bottom-width: 1px;
}

.excel > * {
  flex: none;
}

.excel .titlebar {
  color: #fff;
  font-family: "Liberation Sans", "Noto Sans CJK SC", sans-serif;
  background: linear-gradient(90deg, #0a246a, #88aae0);
}

.xl-menu {
  display: flex;
  align-items: center;
  height: 24px;
  padding-left: 9px;
  background-color: #e0ddd6;
  white-space: nowrap;
}

.xl-menu a {
  width: 58px;
  padding-left: 9px;
}

.xl-tools {
  display: flex;
  align-items: center;
  height: 25px;
  padding-left: 7px;
  background: linear-gradient(#f5f4f2, #d8d5cc);
}

.xl-tools button {
  display: flex;
  justify-content: center;
  width: 23px;
  flex: none;
  background: none;
  border: 0;
}

.sep {
  width: 1px;
  height: 16px;
  margin: 0 3px 0 2px;
  background-color: #a6a6a6;
  flex: none;
}

.drop {
  display: flex;
  justify-content: center;
  width: 11px;
  flex: none;
}

.drop::before {
  border-width: 3px;
}

.xl-tools .sort {
  font-size: 16px;
  line-height: 16px;
}

.sort span {
  display: grid;
  font: 9px/8px "Liberation Sans", sans-serif;
  color: #3050b0;
}

.sort b + b,
.za b:first-child {
  color: #a03030;
}

.za b + b {
  color: #3050b0;
}

.zoom {
  width: 60px;
  height: 17px;
  margin-left: 2px;
  padding-left: 3px;
  border: 0;
}

.xl-tools.pdf {
  height: 26px;
  background: #e0ddd8;
}

.xl-tools .more {
  width: 11px;
  height: 25px;
  background-color: #888;
  align-items: flex-end;
  padding-bottom: 3px;
}

.more::before {
  content: "";
  border: 3px solid transparent;
  border-top-color: #000;
  border-bottom: 0;
}

.formula {
  display: flex;
  align-items: center;
  height: 20px;
}

.formula input {
  height: 18px;
  border: 0;
  font-size: 16px;
}

.formula .cellname {
  width: 107px;
  text-align: center;
}

.formula em {
  margin-left: 54px;
  font-weight: bold;
  width: 18px;
}

.formula .tri {
  display: flex;
  margin-left: 4px;
}

.formula .content {
  flex: 1;
  min-width: 0;
  padding-left: 7px;
}

.excel .grid {
  flex: 1;
  min-height: 0;
  overflow: hidden;
  border-top: 2px solid #606060;
  background-color: #fff;
}

.grid table {
  width: 732px;
  font-size: 16px;
}

.x-no {
  width: 35px;
}

.x-a {
  width: 148px;
}

.grid th,
.grid td {
  height: 19px;
  line-height: 16px;
  border-right: 1px solid #808080;
  border-bottom: 1px solid #808080;
}

.grid th {
  padding: 2px 0 0;
  text-align: center;
  background-color: #d4d0c8;
}

.grid thead th {
  height: 18px;
  line-height: 15px;
}

.grid .on {
  background-color: #b6bdd2;
  border-color: #0a246a;
}

.grid td {
  padding: 2px 2px 0;
  border-bottom-color: #000;
}

.grid .tick {
  display: block;
  height: 14px;
  padding-left: 2px;
  line-height: 14px;
}

.grid td:nth-child(2) {
  border-right: 2px solid #000;
}

.grid .grey {
  background-color: #c0c0c0;
}

.sheets {
  display: flex;
  height: 16px;
  border-top: 1px solid #808080;
}

.sheets button {
  display: flex;
  align-items: center;
  justify-content: center;
  width: 15px;
  border: 0;
}

.sheets .first::before {
  border-left: 1px solid #000;
}

.sheets .last::before {
  border-right: 1px solid #000;
}

.sheets a {
  width: 50px;
  padding-left: 9px;
  background-color: #fff;
  clip-path: polygon(0 0, 100% 0, 100% 100%, 8px 100%);
  line-height: 14px;
}

.sheets .hleft {
  margin-left: auto;
  border: 1px solid;
  border-color: #fff #404040 #404040 #fff;
}

.htrack {
  width: 150px;
  border-left: 1px solid #fff;
}

.xl-status {
  display: flex;
  align-items: center;
  gap: 4px;
  height: 21px;
  padding: 0 7px 0 10px;
  border-top: 1px solid #fff;
}

.xl-status i {
  width: 28px;
  height: 13px;
  border: 1px solid #dedad2;
}

.xl-status i:nth-of-type(1) {
  width: 34px;
  margin-left: auto;
}

.xl-status i:nth-of-type(2) {
  width: 112px;
}

.mark-row {
  left: 19px;
  top: 246px;
  width: 309px;
  height: 24px;
}

.ime {
  position: absolute;
  right: 119px;
  top: 0;
  display: flex;
  align-items: center;
  justify-content: space-between;
  width: 143px;
  height: 21px;
  padding: 0 3px;
  background-color: #f6faff;
  border: 1px solid #a0b8d8;
}

.ime span {
  color: #3c80d0;
  font: bold 15px/20px "Noto Sans CJK SC", sans-serif;
}

/* taskbar */
.taskbar {
  display: flex;
  align-items: center;
  height: 28px;
  padding: 1px 1px 0 2px;
  background-color: #d4d0c8;
  border-top: 1px solid #fff;
  font: 11px/16px "Liberation Sans", "Noto Sans CJK SC", sans-serif;
}

.taskbar button {
  display: flex;
  align-items: center;
  height: 22px;
  border-width: 1px 2px 2px 1px;
  border-color: #fff #606060 #606060 #fff;
}

.taskbar .start {
  width: 50px;
  padding-left: 2px;
  font-size: 12px;
}

.quick {
  display: flex;
  gap: 7px;
  width: 108px;
  height: 20px;
  margin: 0 4px;
  padding: 2px 0 0 9px;
  border-left: 3px double #808080;
  border-right: 3px double #808080;
}

.tasks {
  display: flex;
  flex: 1;
  gap: 2px;
  padding-left: 4px;
}

.tasks button {
  width: 68px;
  padding-left: 3px;
  gap: 1px;
}

.tasks .pressed {
  border-width: 2px 1px 1px 2px;
  border-color: #606060 #fff #fff #606060;
  background-color: #ecebe8;
}

.tray {
  display: flex;
  align-items: center;
  gap: 2px;
  width: 203px;
  height: 22px;
  padding: 0 12px 0 4px;
  border: 1px solid;
  border-color: #808080 #fff #fff #808080;
}

.lang {
  width: 16px;
  height: 16px;
  color: #fff;
  background-color: #000080;
  text-align: center;
}

.tray time {
  margin-left: auto;
}
```
